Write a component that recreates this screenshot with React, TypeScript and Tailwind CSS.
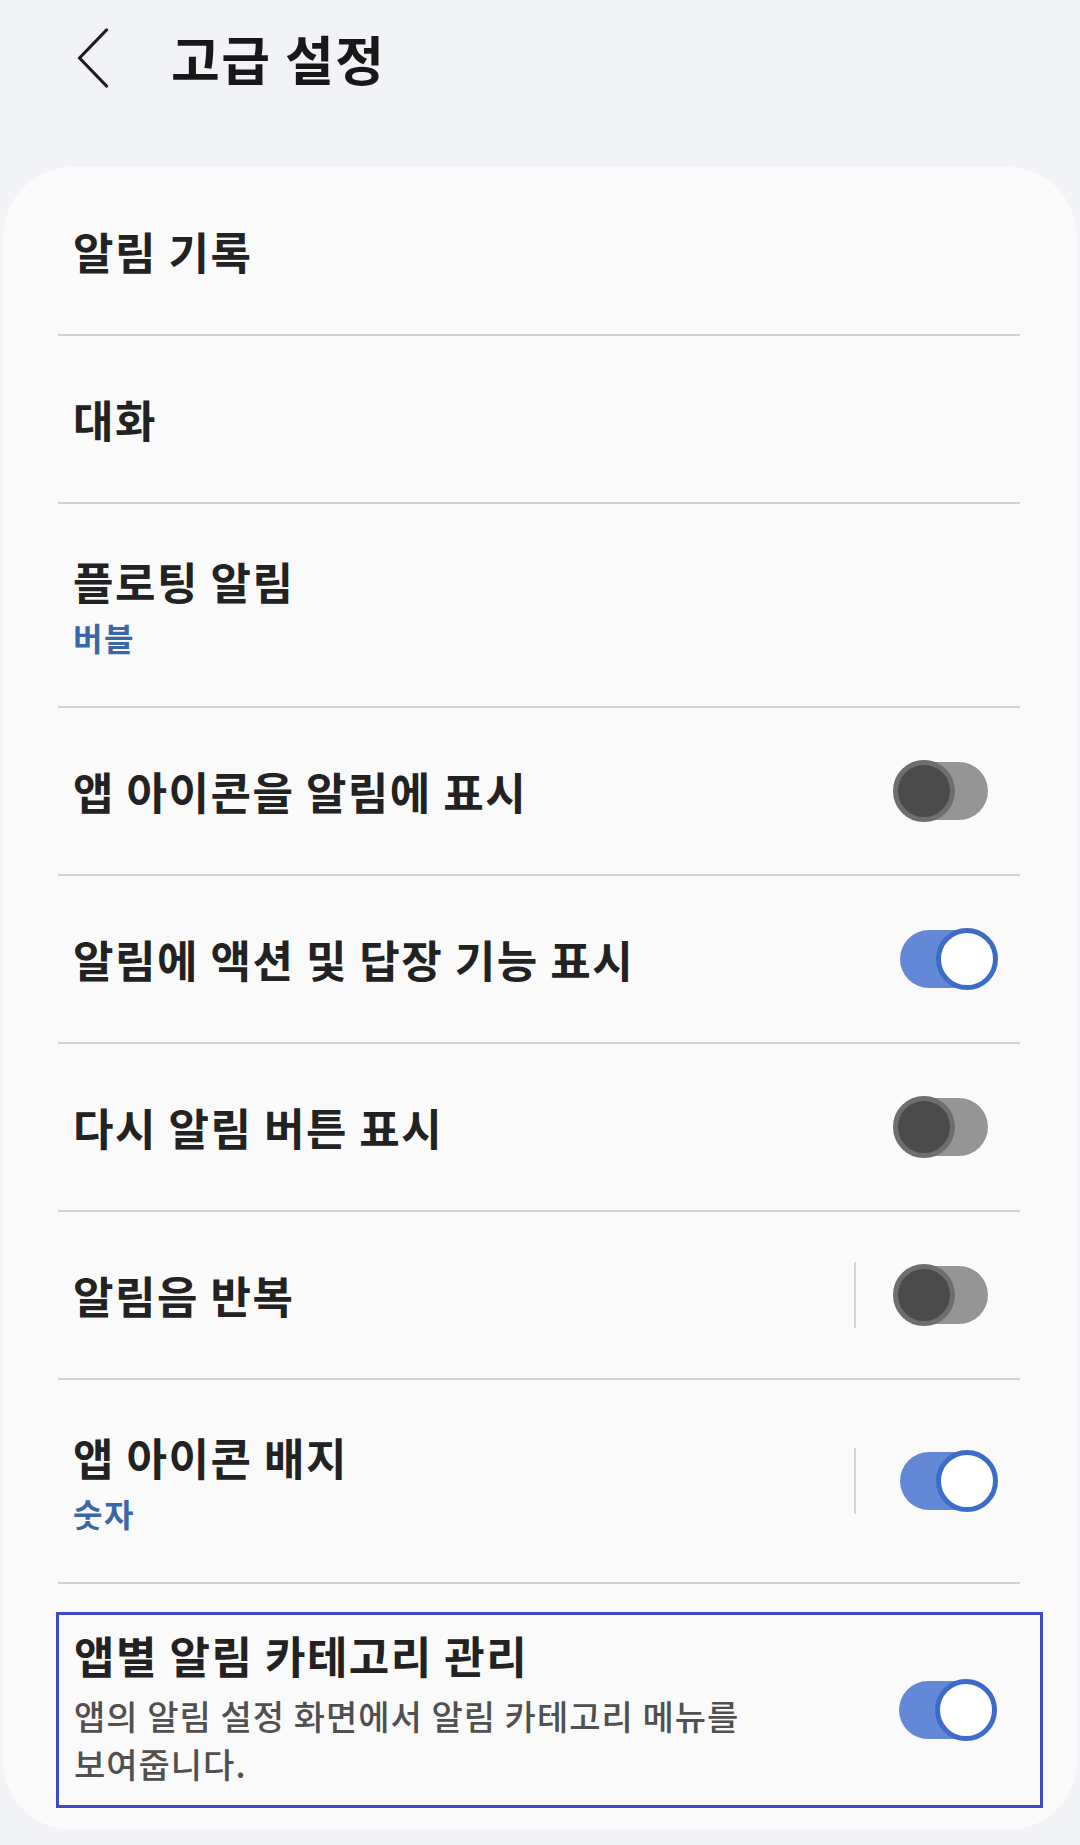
import React from 'react'

const font = { fontFamily: '"Noto Sans CJK KR", "Noto Sans", sans-serif' }

function Toggle({ on }: { on: boolean }) {
  if (on) {
    return (
      <div className="relative w-[105px] h-[62px] shrink-0">
        <div className="absolute left-[7px] right-[12px] top-[2px] h-[58px] rounded-full bg-[#6389d6]" />
        <div className="absolute right-0 top-0 w-[62px] h-[62px] rounded-full bg-white border-[5px] border-[#3d6bc8]" />
      </div>
    )
  }
  return (
    <div className="relative w-[105px] h-[62px] shrink-0">
      <div className="absolute left-[10px] right-[10px] top-[2px] h-[58px] rounded-full bg-[#959595]" />
      <div className="absolute left-0 top-0 w-[62px] h-[62px] rounded-full bg-[#4b4b4b] border-[5px] border-[#6e6e6e]" />
    </div>
  )
}

type Row = {
  title: string
  sub?: string
  toggle?: boolean
  split?: boolean
}

const rows: Row[] = [
  { title: '알림 기록' },
  { title: '대화' },
  { title: '플로팅 알림', sub: '버블' },
  { title: '앱 아이콘을 알림에 표시', toggle: false },
  { title: '알림에 액션 및 답장 기능 표시', toggle: true },
  { title: '다시 알림 버튼 표시', toggle: false },
  { title: '알림음 반복', toggle: false, split: true },
  { title: '앱 아이콘 배지', sub: '숫자', toggle: true, split: true },
]

export default function App() {
  return (
    <div className="w-[1080px] h-[1845px] bg-[#f2f3f7] overflow-hidden" style={font}>
      {/* 상단 헤더 */}
      <div className="h-[167px] flex items-start pt-[26px]">
        <div className="w-[171px] flex pl-[77px] pt-[2px]">
          <svg width="32" height="60" viewBox="0 0 32 60" fill="none">
            <path d="M29.5 2 L2.5 30 L29.5 58" stroke="#1c1c1c" strokeWidth="3.2" strokeLinecap="round" strokeLinejoin="round" />
          </svg>
        </div>
        <h1 className="text-[53px] leading-[64px] font-bold tracking-[1.5px] text-[#181818]">고급 설정</h1>
      </div>

      {/* 설정 카드 */}
      <div className="mx-[3px] h-[1663px] bg-[#fafafa] rounded-[70px] flex flex-col">
        {rows.map((row, idx) => (
          <div key={idx} className="pl-[55px] pr-[57px]">
            <div
              className={`flex items-center border-b-2 border-[#d2d2d2] pl-[15px] pr-[22px] ${
                row.sub ? 'h-[204px]' : idx === 0 ? 'h-[169px]' : 'h-[168px]'
              }`}
            >
              <div className="flex-1 flex flex-col">
                <span className="text-[44px] leading-[56px] font-bold tracking-[1.5px] text-[#222]">{row.title}</span>
                {row.sub && (
                  <span className="mt-[8px] text-[32px] leading-[40px] font-bold tracking-[1.5px] text-[#3a68a6]">{row.sub}</span>
                )}
              </div>
              {row.split && <div className="w-[2px] h-[66px] bg-[#d6d6d6] mr-[37px]" />}
              {row.toggle !== undefined && <Toggle on={row.toggle} />}
            </div>
          </div>
        ))}

        {/* 강조된 마지막 항목 */}
        <div className="pl-[53px] pr-[34px] pt-[28px]">
          <div className="border-[3px] border-[#4049c8] h-[196px] flex items-center pl-[15px] pr-[43px]">
            <div className="flex-1 flex flex-col pb-[6px]">
              <span className="text-[44px] leading-[56px] font-bold tracking-[1.5px] text-[#222]">앱별 알림 카테고리 관리</span>
              <p className="mt-[9px] w-[685px] text-[34px] leading-[48px] font-medium tracking-[1px] text-[#505050]">
                앱의 알림 설정 화면에서 알림 카테고리 메뉴를 보여줍니다.
              </p>
            </div>
            <Toggle on={true} />
          </div>
        </div>
      </div>
    </div>
  )
}
